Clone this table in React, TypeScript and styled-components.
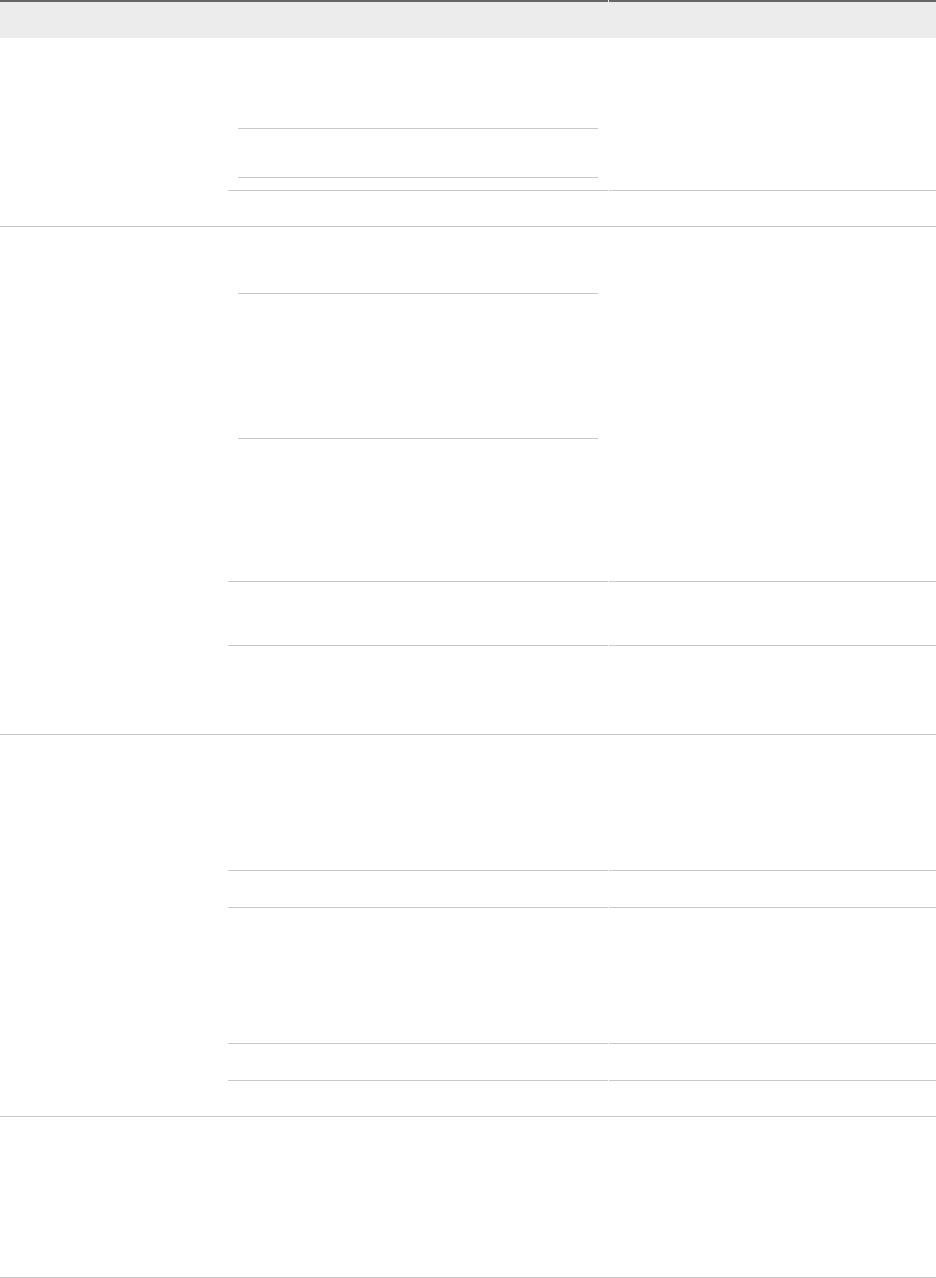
import styled, { createGlobalStyle } from "styled-components";

const GlobalStyle = createGlobalStyle`
  html, body {
    margin: 0;
    padding: 0;
    background: #ffffff;
    font-family: "Liberation Sans", Arial, sans-serif;
  }
`;

const Table = styled.div`
  width: 936px;
  display: flex;
  flex-direction: column;
`;

const Header = styled.div`
  display: grid;
  grid-template-columns: 608px 1fr;
  column-gap: 1px;
  background: #ececec;
  height: 38px;
`;

const HeaderCell = styled.div`
  border-top: 2px solid #666666;
`;

const Group = styled.div`
  display: grid;
  grid-template-columns: 228px 1fr;
  border-bottom: 1px solid #c8c8c8;
`;

const NameCell = styled.div``;

const Rows = styled.div`
  display: flex;
  flex-direction: column;
`;

const Row = styled.div<{ $h: number; $last?: boolean }>`
  display: grid;
  grid-template-columns: 380px 1fr;
  column-gap: 1px;
  min-height: ${(p) => p.$h}px;

  & > div {
    border-bottom: ${(p) => (p.$last ? "none" : "1px solid #c8c8c8")};
  }
`;

const Cell = styled.div<{ $pt?: number }>`
  padding: ${(p) => p.$pt ?? 0}px 10px 0 10px;
`;

const NestedRow = styled.div<{ $h: number }>`
  height: ${(p) => p.$h}px;
  border-bottom: 1px solid #c8c8c8;
`;

type RowSpec = { h: number; nested?: number[] };

const groups: RowSpec[][] = [
  [{ h: 152, nested: [80, 48] }, { h: 35 }],
  [{ h: 354, nested: [56, 144] }, { h: 63 }, { h: 88 }],
  [{ h: 135 }, { h: 36 }, { h: 135 }, { h: 36 }, { h: 35 }],
  [{ h: 160 }],
];

export default function App() {
  return (
    <>
      <GlobalStyle />
      <Table>
        <Header>
          <HeaderCell />
          <HeaderCell />
        </Header>
        {groups.map((rows, gi) => (
          <Group key={gi}>
            <NameCell />
            <Rows>
              {rows.map((r, ri) => {
                const last = ri === rows.length - 1;
                return (
                  <Row key={ri} $h={last ? r.h : r.h + 1} $last={last}>
                    <Cell $pt={r.nested ? 10 : 0}>
                      {r.nested?.map((nh, ni) => (
                        <NestedRow key={ni} $h={nh} />
                      ))}
                    </Cell>
                    <Cell />
                  </Row>
                );
              })}
            </Rows>
          </Group>
        ))}
      </Table>
    </>
  );
}
